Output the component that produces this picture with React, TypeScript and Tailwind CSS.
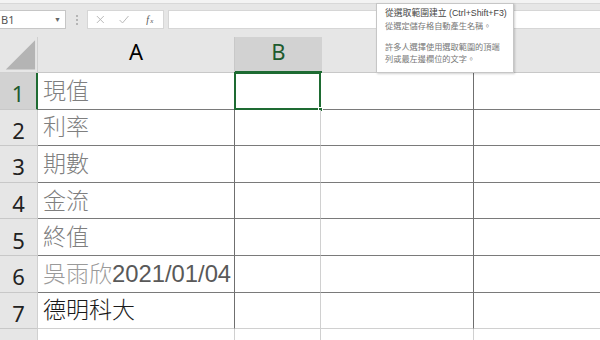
import React from 'react';

const ROWS: { text: React.ReactNode; cls: string }[] = [
  { text: '現值', cls: 'text-[#7f7f7f]' },
  { text: '利率', cls: 'text-[#7f7f7f]' },
  { text: '期數', cls: 'text-[#7f7f7f]' },
  { text: '金流', cls: 'text-[#7f7f7f]' },
  { text: '終值', cls: 'text-[#7f7f7f]' },
  {
    text: (
      <>
        <span className="text-[#9a9a9a]">吳雨欣</span>
        <span className="text-[#595959] text-[23.8px] font-normal">2021/01/04</span>
      </>
    ),
    cls: '',
  },
  { text: '德明科大', cls: 'text-[#1a1a1a]' },
];

const cjk = "font-['Liberation_Sans','Noto_Sans_CJK_TC',sans-serif]";
const hdr = "font-['Noto_Sans','Liberation_Sans',sans-serif]";

function FormulaBar() {
  return (
    <div className="h-[37px] shrink-0 bg-[#e6e6e6] flex flex-col">
      <div className="h-[4px] bg-[#f3f3f3] border-b border-[#d8d8d8]" />
      <div className="flex items-stretch h-[19px] mt-[6px]">
        <div className="w-[67px] -ml-px bg-white border border-[#c6c6c6] flex items-center justify-between pl-[1px] pr-[4px]">
          <span className={`${hdr} text-[11px] text-[#555] leading-none`}>B1</span>
          <span className="text-[7px] text-[#666] leading-none">▼</span>
        </div>
        <div className="w-[21px] flex flex-col items-center justify-center gap-[2px]">
          <span className="w-[2px] h-[2px] bg-[#b5b5b5]" />
          <span className="w-[2px] h-[2px] bg-[#b5b5b5]" />
          <span className="w-[2px] h-[2px] bg-[#b5b5b5]" />
        </div>
        <div className="w-[77px] bg-white border border-[#d6d6d6] flex items-center">
          <svg width="76" height="17" viewBox="0 0 76 17">
            <path d="M9 5 L16 12 M16 5 L9 12" stroke="#b8b8b8" strokeWidth="1" fill="none" />
            <path d="M32 9 L35 12 L41 5" stroke="#b8b8b8" strokeWidth="1" fill="none" />
            <text x="59" y="12" fontSize="10" fontStyle="italic" fontFamily="Liberation Serif, serif" fill="#555">
              f
            </text>
            <text x="63" y="12" fontSize="7" fontStyle="italic" fontFamily="Liberation Serif, serif" fill="#555">
              x
            </text>
          </svg>
        </div>
        <div className="ml-[4px] flex-1 bg-white border border-[#d6d6d6] border-r-0" />
      </div>
    </div>
  );
}

function HeaderRow() {
  return (
    <div className="h-[36px] shrink-0 flex bg-[#e6e6e6]">
      <div className="w-[38px] border-r border-[#d0d0d0] border-b border-[#c8c8c8] flex items-end justify-center">
        <svg width="38" height="36" viewBox="0 0 38 36">
          <polygon points="6,34 36,34 36,4" fill="#b4b4b4" />
        </svg>
      </div>
      <div className={`w-[197px] border-r border-[#c8c8c8] border-b border-[#c8c8c8] flex items-center justify-center pb-[8px] ${hdr} text-[22px] text-black leading-none`}>
        A
      </div>
      <div className={`w-[87px] bg-[#d2d2d2] border-b-2 border-[#1e6b32] flex items-center justify-center pb-[7px] ${hdr} text-[22px] text-[#1e5b2e] leading-none`}>
        B
      </div>
      <div className="w-[152px] border-r border-[#c8c8c8] border-b border-[#c8c8c8]" />
      <div className="flex-1 border-b border-[#c8c8c8]" />
    </div>
  );
}

function DataRow({ idx, row }: { idx: number; row: (typeof ROWS)[number] }) {
  const active = idx === 0;
  const last = idx === ROWS.length - 1;
  const bottom = last ? 'border-[#d0d0d0]' : 'border-[#7a7a7a]';
  return (
    <div className="h-[36.6px] shrink-0 flex">
      <div
        className={`w-[38px] border-b border-[#c8c8c8] flex items-center justify-center pt-[5px] ${hdr} text-[22px] leading-none ${
          active ? 'bg-[#d2d2d2] border-r-2 border-r-[#1e6b32] text-[#1e5b2e]' : 'bg-[#e6e6e6] border-r border-r-[#d0d0d0] text-[#222]'
        }`}
      >
        {idx + 1}
      </div>
      <div
        className={`w-[197px] bg-white border-b ${bottom} border-r border-r-[#6f6f6f] flex items-center pl-[5px] pt-[1px] whitespace-nowrap overflow-hidden ${cjk} font-light text-[23px] leading-none ${row.cls}`}
      >
        {row.text}
      </div>
      <div className={`w-[86px] relative bg-white border-b ${bottom} border-r border-r-[#d0d0d0]`}>
        {active && (
          <>
            <div className="absolute -left-px -top-px -right-px -bottom-px border-2 border-[#1e6b32]" />
            <div className="absolute -right-[3px] -bottom-[3px] w-[5px] h-[5px] bg-[#1e6b32] border border-white" />
          </>
        )}
      </div>
      <div className={`w-[153px] bg-white border-b ${bottom} border-r border-r-[#6f6f6f]`} />
      <div className={`flex-1 bg-white border-b ${bottom}`} />
    </div>
  );
}

function Tooltip() {
  return (
    <div className="absolute left-[376px] top-[3px] w-[138px] h-[70px] bg-white border border-[#c6c6c6] shadow-[1px_1px_2px_rgba(0,0,0,0.18)] px-[8px] pt-[3px] font-['Liberation_Sans','Noto_Sans_CJK_TC',sans-serif] leading-[12px]">
      <div className="text-[8.8px] text-[#444] whitespace-nowrap">從選取範圍建立 (Ctrl+Shift+F3)</div>
      <div className="text-[8.2px] text-[#777] mt-[2px] whitespace-nowrap">從選定儲存格自動產生名稱。</div>
      <div className="text-[8.2px] text-[#777] mt-[9px] whitespace-nowrap">許多人選擇使用選取範圍的頂端</div>
      <div className="text-[8.2px] text-[#777] whitespace-nowrap">列或最左邊欄位的文字。</div>
    </div>
  );
}

export default function App() {
  return (
    <div className="relative w-[600px] h-[340px] overflow-hidden bg-white flex flex-col">
      <FormulaBar />
      <HeaderRow />
      {ROWS.map((row, i) => (
        <DataRow key={i} idx={i} row={row} />
      ))}
      <div className="flex-1 flex">
        <div className="w-[38px] bg-[#e6e6e6] border-r border-[#d0d0d0]" />
        <div className="w-[197px] border-r border-[#d0d0d0]" />
        <div className="w-[86px] border-r border-[#d0d0d0]" />
        <div className="w-[153px] border-r border-[#d0d0d0]" />
        <div className="flex-1" />
      </div>
      <Tooltip />
    </div>
  );
}
